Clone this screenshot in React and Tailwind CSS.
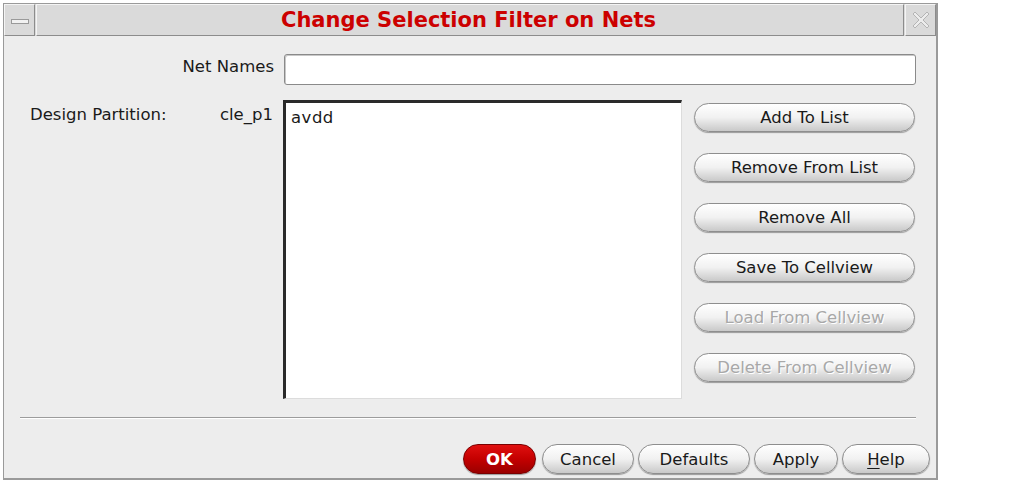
import React from "react";

const font = { fontFamily: '"DejaVu Sans", "Liberation Sans", sans-serif' };

function PillButton({ children, disabled, className = "" }) {
  return (
    <div
      className={
        "flex items-center justify-center rounded-full border border-[#8e8e8e] bg-linear-to-b from-[#ffffff] via-[#f1f1f1] to-[#c9c9c9] shadow-[0_1px_1px_rgba(0,0,0,0.35)] text-[16.5px] leading-none pt-[2px] " +
        (disabled
          ? "text-[#a8a8a8] [text-shadow:1px_1px_0_#ffffff] "
          : "text-[#1a1a1a] ") +
        className
      }
    >
      {children}
    </div>
  );
}

export default function App() {
  return (
    <div className="w-[1013px] h-[489px] bg-white pt-[3px] pl-[3px]" style={font}>
      <div className="w-[935px] h-[477px] border border-[#9a9a9a] border-r-2 border-b-2 bg-[#ededed] flex flex-col">
        {/* Title bar */}
        <div className="h-[32px] flex bg-[#dadada]">
          <div className="w-[31px] h-full border-t border-l border-[#f4f4f4] border-r border-b border-r-[#8c8c8c] border-b-[#8c8c8c] flex items-center justify-center">
            <div className="w-[18px] h-[5px] bg-[#f2f2f2] border border-[#9a9a9a] mt-[2px]" />
          </div>
          <div className="flex-1 h-full border-t border-l border-[#f4f4f4] border-r border-b border-r-[#8c8c8c] border-b-[#8c8c8c] ml-[1px] flex items-center justify-center">
            <span className="text-[21px] font-bold text-[#cc0000] leading-none mt-[1px] mr-[3px]">
              Change Selection Filter on Nets
            </span>
          </div>
          <div className="w-[31px] h-full border-t border-l border-[#f4f4f4] border-r border-b border-r-[#8c8c8c] border-b-[#8c8c8c] ml-[1px] flex items-center justify-center">
            <svg width="22" height="22" viewBox="0 0 22 22">
              <path
                d="M3 5 L5 3 L11 9 L17 3 L19 5 L13 11 L19 17 L17 19 L11 13 L5 19 L3 17 L9 11 Z"
                fill="#ececec"
                stroke="#b4b4b4"
                strokeWidth="1"
              />
            </svg>
          </div>
        </div>

        {/* Net Names row */}
        <div className="flex items-center mt-[18px]">
          <div className="w-[270px] text-right text-[16.5px] text-[#1a1a1a] leading-none pb-[4px]">
            Net Names
          </div>
          <div className="ml-[10px] w-[632px] h-[31px] bg-white border border-[#8a8a8a] rounded-[3px] shadow-[inset_1px_1px_0_#c8c8c8]" />
        </div>

        {/* Partition row */}
        <div className="flex mt-[15px]">
          <div className="w-[279px] flex pl-[26px] pr-[10px] pt-[7px] text-[16.5px] text-[#1a1a1a] leading-none">
            <span>Design Partition:</span>
            <span className="ml-auto">cle_p1</span>
          </div>
          <div className="w-[399px] h-[299px] bg-white border-l-[3px] border-t-[3px] border-[#2a2a2a] border-r border-b border-r-[#dcdcdc] border-b-[#dcdcdc] pl-[5px] pt-[3px]">
            <span className="text-[16.5px] text-[#1a1a1a] leading-none tracking-[0.5px]">avdd</span>
          </div>
          <div className="ml-[12px] w-[221px] pt-[3px] flex flex-col gap-[21px]">
            <PillButton className="h-[29px]">Add To List</PillButton>
            <PillButton className="h-[29px]">Remove From List</PillButton>
            <PillButton className="h-[29px]">Remove All</PillButton>
            <PillButton className="h-[29px]">Save To Cellview</PillButton>
            <PillButton className="h-[29px]" disabled>Load From Cellview</PillButton>
            <PillButton className="h-[29px]" disabled>Delete From Cellview</PillButton>
          </div>
        </div>

        {/* Separator */}
        <div className="mt-[18px] ml-[16px] w-[896px] h-[1px] bg-[#9c9c9c]" />
        <div className="ml-[16px] w-[896px] h-[1px] bg-[#ffffff]" />

        {/* Bottom buttons */}
        <div className="mt-[25px] flex justify-end pr-[6px]">
          <div className="w-[73px] h-[30px] rounded-full border border-[#7a0000] bg-linear-to-b from-[#e01010] via-[#c40000] to-[#9a0000] shadow-[0_1px_1px_rgba(0,0,0,0.35)] flex items-center justify-center text-white font-bold text-[16.5px] leading-none pt-[2px]">
            OK
          </div>
          <PillButton className="w-[92px] h-[30px] ml-[6px]">Cancel</PillButton>
          <PillButton className="w-[112px] h-[30px] ml-[4px]">Defaults</PillButton>
          <PillButton className="w-[84px] h-[30px] ml-[4px]">Apply</PillButton>
          <PillButton className="w-[88px] h-[30px] ml-[4px]">
            <span>
              <span className="underline underline-offset-[3px]">H</span>elp
            </span>
          </PillButton>
        </div>
      </div>
    </div>
  );
}
